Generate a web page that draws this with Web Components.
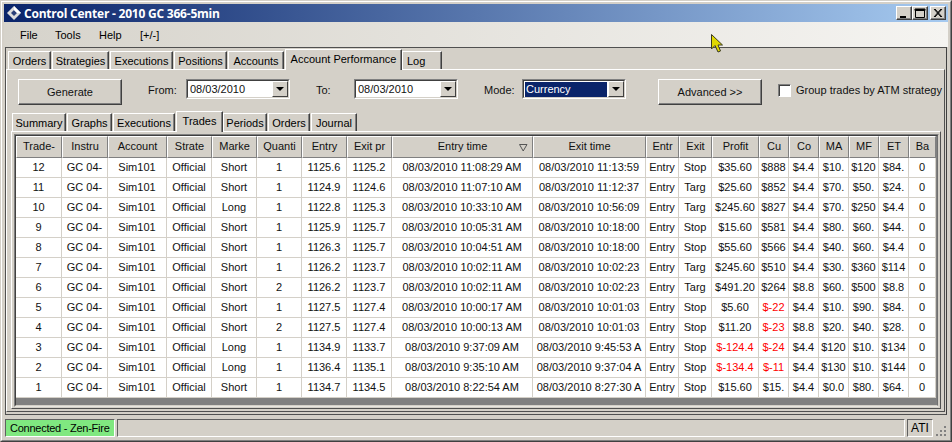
<!DOCTYPE html>
<html>
<head>
<meta charset="utf-8">
<title>Control Center</title>
<style>
html, body { margin: 0; padding: 0; background: #d4d0c8; }
body { font: 11px "Liberation Sans", Arial, sans-serif; color: #000; }
</style>
</head>
<body>
<control-window>
  <title-bar slot="title">Control Center - 2010 GC 366-5min</title-bar>
  <menu-bar slot="menu">
    <span style="width:35px">File</span><span style="width:44px">Tools</span><span style="width:41px">Help</span><span>[+/-]</span>
  </menu-bar>
  <tab-strip slot="frame" left="2">
    <tab-item style="width:43px">Orders</tab-item>
    <tab-item style="width:57px">Strategies</tab-item>
    <tab-item style="width:63px">Executions</tab-item>
    <tab-item style="width:53px">Positions</tab-item>
    <tab-item style="width:56px">Accounts</tab-item>
    <tab-item active style="width:117px">Account Performance</tab-item>
    <tab-item style="width:40px;text-align:left;padding-left:4px">Log</tab-item>
  </tab-strip>
  <tab-panel slot="frame">
    <perf-toolbar></perf-toolbar>
    <tab-strip left="5">
      <tab-item style="width:54px">Summary</tab-item>
      <tab-item style="width:45px">Graphs</tab-item>
      <tab-item style="width:62px">Executions</tab-item>
      <tab-item active style="width:47px">Trades</tab-item>
      <tab-item style="width:44px">Periods</tab-item>
      <tab-item style="width:42px">Orders</tab-item>
      <tab-item style="width:46px">Journal</tab-item>
    </tab-strip>
    <trade-grid></trade-grid>
  </tab-panel>
  <status-bar slot="status"></status-bar>
</control-window>

<script>
// outer window chrome, the cursor sits on top of it
class ControlWindow extends HTMLElement {
  connectedCallback() {
    const root = this.attachShadow({ mode: 'open' });
    root.innerHTML = `
    <style>
    :host { display: block; width: 952px; height: 442px; box-sizing: border-box; position: relative; overflow: hidden;
      border: 1px solid; border-color: #d4d0c8 #404040 #404040 #d4d0c8; background: #d4d0c8; }
    .inner { box-sizing: border-box; height: 100%; border: 1px solid; border-color: #fff #808080 #808080 #fff; padding: 2px; display: flex; flex-direction: column; }
    .frame { box-sizing: border-box; height: 368px; flex: none; margin: 0 1px; padding: 1px 0 2px; border: 1px solid #505050; border-right-color: #404040; }
    svg { position: absolute; left: 709px; top: 32px; }
    </style>
    <div class="inner">
      <slot name="title"></slot>
      <slot name="menu"></slot>
      <div class="frame"><slot name="frame"></slot></div>
      <slot name="status"></slot>
    </div>
    <svg width="16" height="22" viewBox="0 0 16 22"><path d="M1.5 1.5 V16 L5 12.5 L8 19 L10.5 18 L8 12 H12.5 Z" fill="#e0d800" stroke="#3a3a20" stroke-width="1"/></svg>`;
  }
}

class TitleBar extends HTMLElement {
  connectedCallback() {
    const root = this.attachShadow({ mode: 'open' });
    root.innerHTML = `
    <style>
    :host { display: flex; align-items: center; height: 18px; flex: none; color: #fff; font: bold 12px "Open Sans", "Noto Sans", sans-serif;
      background: linear-gradient(to right, #0a246a, #a6caf0); }
    svg { margin: 0 2px 0 2px; flex: none; }
    .t { flex: 1; white-space: nowrap; letter-spacing: -0.22px; }
    .b { width: 16px; height: 14px; box-sizing: border-box; background: #d4d0c8; border: 1px solid; border-color: #fff #404040 #404040 #fff; box-shadow: inset -1px -1px #808080; display: block; }
    .b svg { margin: 0; display: block; }
    .g { margin-right: 2px; }
    </style>
    <svg width="16" height="16" viewBox="0 0 16 16"><path d="M8 1 L15 8 L8 15 L1 8 Z" fill="#dcdcdc"/><path d="M8 5 L11 8 L8 11 L5 8 Z" fill="#2a3f78"/><path d="M8 1 L15 8 H11 L8 5 Z" fill="#fff"/></svg>
    <span class="t"><slot></slot></span>
    <span class="b"><svg width="14" height="12"><rect x="3" y="9" width="6" height="2" fill="#000"/></svg></span>
    <span class="b g"><svg width="14" height="12"><path d="M2.5 2.5 H11.5 V10.5 H2.5 Z M2 2 H12 V3.5 H2 Z" fill="none" stroke="#000"/></svg></span>
    <span class="b" style="margin-right:2px"><svg width="14" height="12"><path d="M3 2 L10 10 M4 2 L11 10 M10 2 L3 10 M11 2 L4 10" stroke="#000" fill="none"/></svg></span>`;
  }
}

class MenuBar extends HTMLElement {
  connectedCallback() {
    const root = this.attachShadow({ mode: 'open' });
    root.innerHTML = `
    <style>
    :host { display: flex; align-items: center; flex: none; height: 25px; box-sizing: border-box; padding: 0 0 0 16px;
      background: linear-gradient(to right, #d6d3cb, #f5f4f1); }
    ::slotted(span) { display: block; }
    </style>
    <slot></slot>`;
  }
}

class TabStrip extends HTMLElement {
  connectedCallback() {
    const root = this.attachShadow({ mode: 'open' });
    const left = this.getAttribute('left') || 0;
    root.innerHTML = `
    <style>
    :host { display: flex; align-items: flex-end; padding-left: ${left}px; box-sizing: border-box; height: 20px; position: relative; }
    ::slotted(tab-item) { flex: none; }
    </style>
    <slot></slot>`;
  }
}

class TabItem extends HTMLElement {
  connectedCallback() {
    const root = this.attachShadow({ mode: 'open' });
    const active = this.hasAttribute('active');
    root.innerHTML = `
    <style>
    :host { display: block; box-sizing: border-box; height: ${active ? 21 : 18}px; ${active ? 'margin-bottom:-1px;z-index:1;' : 'margin-right:1px;'}
      border: 1px solid; border-color: #fff #404040 transparent #fff; border-bottom: 0; background: #d4d0c8; text-align: center; white-space: nowrap; position: relative;
      box-shadow: inset -1px 0 #808080; line-height: ${active ? 19 : 18}px; overflow: hidden; }
    </style><slot></slot>`;
  }
}

// raised page of the outer tab control, holds toolbar, inner tabs and the grid
class TabPanel extends HTMLElement {
  connectedCallback() {
    const root = this.attachShadow({ mode: 'open' });
    root.innerHTML = `
    <style>
    :host { display: block; box-sizing: border-box; height: 343px; margin-right: 1px; padding-bottom: 2px; border: 1px solid; border-color: #fff #505050 #505050 #fff; }
    </style><slot></slot>`;
  }
}

class PerfToolbar extends HTMLElement {
  connectedCallback() {
    const root = this.attachShadow({ mode: 'open' });
    root.innerHTML = `
    <style>
    :host { display: flex; box-sizing: border-box; height: 41px; padding: 9px 0 0 11px; align-items: flex-start; overflow: hidden; white-space: nowrap; color: #111; }
    .btn { box-sizing: border-box; width: 104px; height: 26px; display: flex; align-items: center; justify-content: center; background: #d4d0c8; border: 1px solid; border-color: #fff #404040 #404040 #fff; box-shadow: inset -1px -1px #808080; flex: none; }
    .lbl { line-height: 23px; flex: none; }
    .combo { box-sizing: border-box; width: 104px; height: 20px; display: flex; flex: none; background: #fff; border: 1px solid; border-color: #808080 #fff #fff #808080; }
    .combo .in { flex: 1; border: 1px solid; border-color: #404040 #d4d0c8 #d4d0c8 #404040; padding: 1px 2px 0 2px; line-height: 14px; display: flex; min-width: 0; }
    .combo .txt { flex: 1; min-width: 0; overflow: hidden; }
    .combo.sel .txt { background: #0a246a; color: #fff; margin: 0 1px 0 -1px; padding-left: 1px; }
    .arrow { width: 16px; height: 16px; flex: none; margin: -1px -2px 0 0; box-sizing: border-box; background: #d4d0c8; border: 1px solid; border-color: #fff #404040 #404040 #fff; display: flex; align-items: center; justify-content: center; }
    .arrow i { border: 4px solid transparent; border-top: 4px solid #000; border-bottom: 0; display: block; }
    .check { width: 13px; height: 13px; box-sizing: border-box; background: #fff; border: 1px solid; border-color: #808080 #fff #fff #808080; box-shadow: inset 1px 1px #404040; margin: 5px 5px 0 16px; flex: none; }
    </style>
    <div class="btn">Generate</div>
    <span class="lbl" style="margin-left:26px;width:38px">From:</span>
    <div class="combo"><div class="in"><span class="txt">08/03/2010</span><span class="arrow"><i></i></span></div></div>
    <span class="lbl" style="margin-left:26px;width:38px">To:</span>
    <div class="combo"><div class="in"><span class="txt">08/03/2010</span><span class="arrow"><i></i></span></div></div>
    <span class="lbl" style="margin-left:26px;width:38px">Mode:</span>
    <div class="combo sel"><div class="in"><span class="txt">Currency</span><span class="arrow"><i></i></span></div></div>
    <div class="btn" style="margin-left:32px">Advanced &gt;&gt;</div>
    <span class="check"></span>
    <span class="lbl">Group trades by ATM strategy</span>`;
  }
}

const COLUMNS = [
  ['Trade-', 46], ['Instru', 46], ['Account', 59], ['Strate', 45], ['Marke', 45], ['Quanti', 45], ['Entry', 45], ['Exit pr', 45],
  ['Entry time', 141], ['Exit time', 113], ['Entr', 33], ['Exit', 33], ['Profit', 47], ['Cu', 30], ['Co', 30], ['MA', 30], ['MF', 30], ['ET', 30], ['Ba', 27]
];

const TRADES = [
  [12, 'Short', 1, '1125.6', '1125.2', '08/03/2010 11:08:29 AM', '08/03/2010 11:13:59', 'Stop', '$35.60', '$888', '$4.4', '$10.', '$120', '$84.'],
  [11, 'Short', 1, '1124.9', '1124.6', '08/03/2010 11:07:10 AM', '08/03/2010 11:12:37', 'Targ', '$25.60', '$852', '$4.4', '$70.', '$50.', '$24.'],
  [10, 'Long', 1, '1122.8', '1125.3', '08/03/2010 10:33:10 AM', '08/03/2010 10:56:09', 'Targ', '$245.60', '$827', '$4.4', '$70.', '$250', '$4.4'],
  [9, 'Short', 1, '1125.9', '1125.7', '08/03/2010 10:05:31 AM', '08/03/2010 10:18:00', 'Stop', '$15.60', '$581', '$4.4', '$80.', '$60.', '$44.'],
  [8, 'Short', 1, '1126.3', '1125.7', '08/03/2010 10:04:51 AM', '08/03/2010 10:18:00', 'Stop', '$55.60', '$566', '$4.4', '$40.', '$60.', '$4.4'],
  [7, 'Short', 1, '1126.2', '1123.7', '08/03/2010 10:02:11 AM', '08/03/2010 10:02:23', 'Targ', '$245.60', '$510', '$4.4', '$30.', '$360', '$114'],
  [6, 'Short', 2, '1126.2', '1123.7', '08/03/2010 10:02:11 AM', '08/03/2010 10:02:23', 'Targ', '$491.20', '$264', '$8.8', '$60.', '$500', '$8.8'],
  [5, 'Short', 1, '1127.5', '1127.4', '08/03/2010 10:00:17 AM', '08/03/2010 10:01:03', 'Stop', '$5.60', '$-22', '$4.4', '$10.', '$90.', '$84.'],
  [4, 'Short', 2, '1127.5', '1127.4', '08/03/2010 10:00:13 AM', '08/03/2010 10:01:03', 'Stop', '$11.20', '$-23', '$8.8', '$20.', '$40.', '$28.'],
  [3, 'Long', 1, '1134.9', '1133.7', '08/03/2010 9:37:09 AM', '08/03/2010 9:45:53 A', 'Stop', '$-124.4', '$-24', '$4.4', '$120', '$10.', '$134'],
  [2, 'Long', 1, '1136.4', '1135.1', '08/03/2010 9:35:10 AM', '08/03/2010 9:37:04 A', 'Stop', '$-134.4', '$-11', '$4.4', '$130', '$10.', '$144'],
  [1, 'Short', 1, '1134.7', '1134.5', '08/03/2010 8:22:54 AM', '08/03/2010 8:27:30 A', 'Stop', '$15.60', '$15.', '$4.4', '$0.0', '$80.', '$64.']
];

class TradeGrid extends HTMLElement {
  connectedCallback() {
    const root = this.attachShadow({ mode: 'open' });
    const head = COLUMNS.map(c => `<div class="h">${c[0]}${c[0] == 'Entry time' ? '<svg width="9" height="8"><path d="M.5 .5 H8 L4.2 7 Z" fill="none" stroke="#555"/></svg>' : ''}</div>`).join('');
    const rows = TRADES.map(t => {
      const cells = [t[0], 'GC 04-', 'Sim101', 'Official', t[1], t[2], t[3], t[4], t[5], t[6], 'Entry', t[7], t[8], t[9], t[10], t[11], t[12], t[13], '0'];
      return cells.map(v => `<div class="c${String(v).startsWith('$-') ? ' neg' : ''}">${v}</div>`).join('');
    }).join('');
    root.innerHTML = `
    <style>
    :host { display: block; box-sizing: border-box; height: 278px; margin: 0 3px 0 4px; padding: 2px 1px 1px 2px; border: 1px solid; border-color: #fff #505050 #505050 #fff; }
    .outer { box-sizing: border-box; height: 100%; border: 1px solid; border-color: #808080 #d4d0c8 #e8e6e0 #808080; }
    .view { box-sizing: border-box; height: 100%; border: 1px solid; border-color: #404040 #707070 #d4d0c8 #404040; background: #808080; overflow: hidden; }
    .grid { display: grid; grid-template-columns: ${COLUMNS.map(c => c[1] + 'px').join(' ')}; grid-template-rows: 22px repeat(12, 20px); }
    .h, .c { box-sizing: border-box; overflow: hidden; white-space: nowrap; text-align: center; }
    .h { background: #d4d0c8; border: 1px solid; border-color: #fff #808080 #808080 #fff; line-height: 19px; position: relative; color: #111; }
    .h svg { position: absolute; right: 4px; top: 7px; }
    .c { background: #fff; border-right: 1px solid #d4d0c8; border-bottom: 1px solid #d4d0c8; line-height: 19px; color: #111; }
    .neg { color: #ff0000; }
    </style>
    <div class="outer"><div class="view"><div class="grid">${head}${rows}</div></div></div>`;
  }
}

class StatusBar extends HTMLElement {
  connectedCallback() {
    const root = this.attachShadow({ mode: 'open' });
    root.innerHTML = `
    <style>
    :host { display: flex; height: 18px; flex: none; margin-top: 4px; padding-left: 1px; align-items: stretch; position: relative; }
    .p { box-sizing: border-box; border: 1px solid; border-color: #606060 #fff #fff #606060; line-height: 16px; white-space: nowrap; overflow: hidden; }
    .g { position: absolute; right: 0; bottom: 0; }
    </style>
    <div class="p" style="width:110px;background:#80e880;padding-left:4px;margin-right:2px;letter-spacing:-0.25px">Connected - Zen-Fire</div>
    <div class="p" style="width:788px;margin-right:2px"></div>
    <div class="p" style="width:26px;text-align:center;font-size:12px">ATI</div>
    <svg class="g" width="13" height="13"><g fill="#808080"><rect x="9" y="2" width="2" height="2"/><rect x="5" y="6" width="2" height="2"/><rect x="9" y="6" width="2" height="2"/><rect x="1" y="10" width="2" height="2"/><rect x="5" y="10" width="2" height="2"/><rect x="9" y="10" width="2" height="2"/></g></svg>`;
  }
}

customElements.define('control-window', ControlWindow);
customElements.define('title-bar', TitleBar);
customElements.define('menu-bar', MenuBar);
customElements.define('tab-strip', TabStrip);
customElements.define('tab-item', TabItem);
customElements.define('tab-panel', TabPanel);
customElements.define('perf-toolbar', PerfToolbar);
customElements.define('trade-grid', TradeGrid);
customElements.define('status-bar', StatusBar);
</script>
</body>
</html>
